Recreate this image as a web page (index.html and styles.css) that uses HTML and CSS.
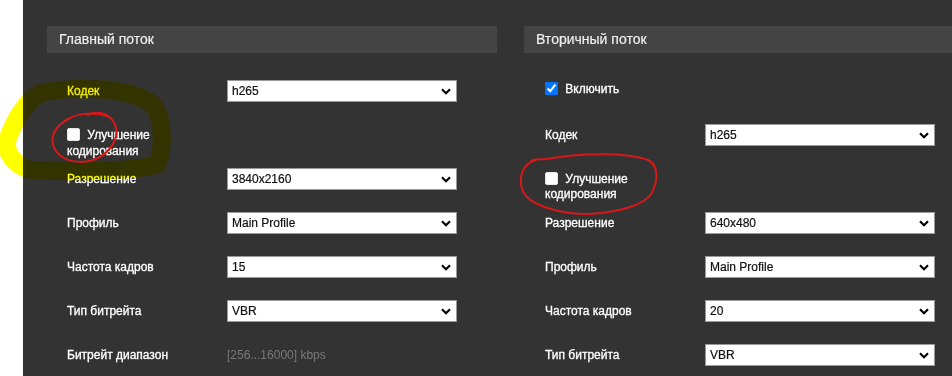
FILE: index.html
```html
<!DOCTYPE html>
<html>
  <head>
    <title>Настройки видео</title>
    <link rel="stylesheet" href="styles.css">
  </head>
  <body>
    <div class="screen">
      <div class="page">
        <!-- Main stream -->
        <div class="column column-main">
          <div class="section-title">Главный поток</div>

          <div class="row">
            <div class="label label-active">Кодек</div>
            <div class="select"><span>h265</span><svg class="chevron" viewBox="0 0 10 7"><path d="M1 1.2 L5 5.2 L9 1.2" /></svg></div>
          </div>

          <div class="row row-check">
            <label class="check-label"><input type="checkbox"> Улучшение кодирования</label>
          </div>

          <div class="row">
            <div class="label">Разрешение</div>
            <div class="select"><span>3840x2160</span><svg class="chevron" viewBox="0 0 10 7"><path d="M1 1.2 L5 5.2 L9 1.2" /></svg></div>
          </div>

          <div class="row">
            <div class="label">Профиль</div>
            <div class="select"><span>Main Profile</span><svg class="chevron" viewBox="0 0 10 7"><path d="M1 1.2 L5 5.2 L9 1.2" /></svg></div>
          </div>

          <div class="row">
            <div class="label">Частота кадров</div>
            <div class="select"><span>15</span><svg class="chevron" viewBox="0 0 10 7"><path d="M1 1.2 L5 5.2 L9 1.2" /></svg></div>
          </div>

          <div class="row">
            <div class="label">Тип битрейта</div>
            <div class="select"><span>VBR</span><svg class="chevron" viewBox="0 0 10 7"><path d="M1 1.2 L5 5.2 L9 1.2" /></svg></div>
          </div>

          <div class="row">
            <div class="label">Битрейт диапазон</div>
            <div class="hint">[256...16000] kbps</div>
          </div>
        </div>

        <!-- Sub stream -->
        <div class="column column-sub">
          <div class="section-title">Вторичный поток</div>

          <div class="row row-enable">
            <label class="check-label check-wide"><input type="checkbox" checked> Включить</label>
          </div>

          <div class="row">
            <div class="label">Кодек</div>
            <div class="select"><span>h265</span><svg class="chevron" viewBox="0 0 10 7"><path d="M1 1.2 L5 5.2 L9 1.2" /></svg></div>
          </div>

          <div class="row row-check row-check-sub">
            <label class="check-label"><input type="checkbox"> Улучшение кодирования</label>
          </div>

          <div class="row">
            <div class="label">Разрешение</div>
            <div class="select"><span>640x480</span><svg class="chevron" viewBox="0 0 10 7"><path d="M1 1.2 L5 5.2 L9 1.2" /></svg></div>
          </div>

          <div class="row">
            <div class="label">Профиль</div>
            <div class="select"><span>Main Profile</span><svg class="chevron" viewBox="0 0 10 7"><path d="M1 1.2 L5 5.2 L9 1.2" /></svg></div>
          </div>

          <div class="row">
            <div class="label">Частота кадров</div>
            <div class="select"><span>20</span><svg class="chevron" viewBox="0 0 10 7"><path d="M1 1.2 L5 5.2 L9 1.2" /></svg></div>
          </div>

          <div class="row">
            <div class="label">Тип битрейта</div>
            <div class="select"><span>VBR</span><svg class="chevron" viewBox="0 0 10 7"><path d="M1 1.2 L5 5.2 L9 1.2" /></svg></div>
          </div>
        </div>
      </div>

      <!-- Hand-drawn marks on top of the screenshot -->
      <svg class="marks marks-yellow" viewBox="0 0 952 376">
        <path d="M40 93 C 80 85 130 88 152 104 C 164 116 164 150 157 165 C 120 173 60 172 30 170 C 12 164 4 150 8 138 C 14 122 24 103 40 93 Z" />
      </svg>
      <svg class="marks marks-red" viewBox="0 0 952 376">
        <path d="M107 116 C 95 112 80 113 70 118 C 58 124 50 134 53 145 C 56 155 66 162 82 162 C 98 161 110 152 115 140 C 119 128 114 118 104 114 C 98 112 92 113 88 115" />
        <path d="M531 161 C 536 158 540 160 546 159 C 580 153 625 152 648 160 C 660 166 657 182 652 193 C 644 206 615 213 588 214 C 560 214 535 206 526 196 C 518 186 520 172 527 165 C 530 162 532 161 536 160" />
      </svg>
    </div>
  </body>
</html>
```

FILE: styles.css
```css
body {
  margin: 0;
  background-color: #fff;
  font-family: "Liberation Sans", Arial, sans-serif;
}

.screen {
  position: relative;
  width: 952px;
  height: 376px;
  overflow: hidden;
}

.page {
  display: flex;
  gap: 27px;
  height: 376px;
  margin-left: 23px;
  padding: 26px 0 0 24px;
  box-sizing: border-box;
  background-color: #333;
}

.column-main {
  width: 450px;
  flex-shrink: 0;
}

.column-sub {
  flex: 1;
}

.section-title {
  height: 27px;
  line-height: 27px;
  padding-left: 12px;
  background-color: #444;
  color: #eee;
  font-size: 14px;
  -webkit-text-stroke: 0.2px #eee;
  margin-bottom: 16px;
}

.column-sub .section-title {
  padding-left: 12px;
  margin-right: -20px;
}

.row {
  display: flex;
  align-items: center;
  height: 44px;
  padding-left: 20px;
}

.column-sub .row {
  padding-left: 21px;
}

.row-enable {
  padding-bottom: 4px;
  box-sizing: border-box;
}

.label {
  width: 160px;
  flex-shrink: 0;
  color: #fff;
  font-size: 12px;
  -webkit-text-stroke: 0.3px #fff;
}

.label-active {
  color: #f7f000;
  -webkit-text-stroke: 0.3px #f7f000;
}

.row-check {
  align-items: flex-start;
  padding-top: 14px;
  box-sizing: border-box;
}

.row-check-sub {
  padding-top: 15px;
}

.check-label {
  width: 100px;
  color: #fff;
  font-size: 12px;
  line-height: 16px;
  -webkit-text-stroke: 0.3px #fff;
}

.row-check-sub .check-label {
  line-height: 15px;
}

.check-wide {
  width: auto;
}

.check-label input {
  width: 13px;
  height: 13px;
  margin: 0 4px 0 0;
  vertical-align: -2px;
  accent-color: #0075ff;
}

.check-label input:not(:checked) {
  appearance: none;
  background-color: #fff;
  border: 1px solid #e6e6e6;
  border-radius: 2px;
}

.select {
  display: flex;
  align-items: center;
  justify-content: space-between;
  width: 230px;
  height: 22px;
  box-sizing: border-box;
  padding: 0 5px 0 4px;
  background-color: #fff;
  border: 1px solid #999;
  color: #111;
  font-size: 12px;
  -webkit-text-stroke: 0.2px #111;
}

.chevron {
  width: 10px;
  height: 7px;
}

.chevron path {
  fill: none;
  stroke: #000;
  stroke-width: 2.2;
}

.hint {
  color: #7a7a7a;
  font-size: 12px;
}

.marks {
  position: absolute;
  top: 0;
  left: 0;
  width: 952px;
  height: 376px;
  pointer-events: none;
}

.marks path {
  fill: none;
  stroke-linecap: round;
  stroke-linejoin: round;
}

.marks-yellow {
  mix-blend-mode: multiply;
}

.marks-yellow path {
  stroke: #ffff00;
  stroke-width: 18;
}

.marks-red path {
  stroke: #d81818;
  stroke-width: 2;
}
```
